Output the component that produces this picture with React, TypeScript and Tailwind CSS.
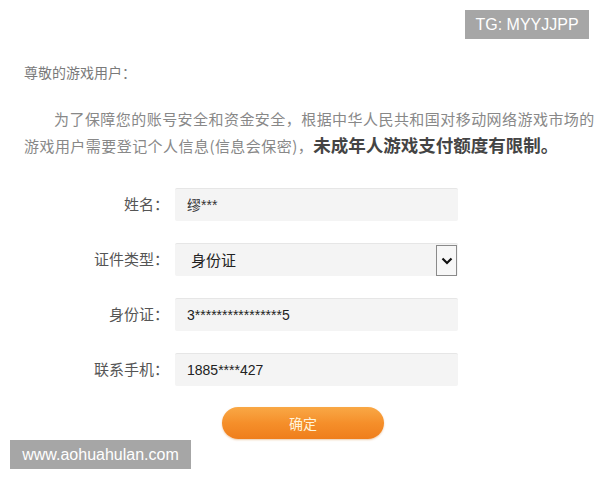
import React from "react";

const font = '"Noto Sans CJK SC", "Noto Sans", sans-serif';

function Field({ label, children }: { label: string; children: React.ReactNode }) {
  return (
    <div className="flex items-center">
      <div className="w-[169px] text-right text-[15px] leading-[20px] text-[#555] -mt-[2px]">{label}</div>
      <div className="ml-[6px]">{children}</div>
    </div>
  );
}

function TextBox({ value, cjk }: { value: string; cjk?: boolean }) {
  return (
    <div className="w-[283px] h-[33px] bg-[#f4f4f4] border-t border-[#e6e6e6] rounded-[2px] flex items-center pl-[12px]">
      <span
        className={cjk ? "text-[14px] text-[#333]" : "text-[14px] text-[#222]"}
        style={{ fontFamily: '"Liberation Sans", "Noto Sans CJK SC", sans-serif' }}
      >
        {value}
      </span>
    </div>
  );
}

export default function App() {
  return (
    <div className="relative w-[600px] h-[480px] bg-white overflow-hidden" style={{ fontFamily: font }}>
      <div className="pl-[24px] pt-[62px]">
        <p className="text-[14px] leading-[20px] text-[#7a7a7a]">尊敬的游戏用户：</p>
        <p className="mt-[24px] text-[15px] leading-[26px] text-[#888] whitespace-nowrap tracking-[0.45px]">
          <span className="pl-[30px]">为了保障您的账号安全和资金安全，根据中华人民共和国对移动网络游戏市场的</span>
          <br />
          游戏用户需要登记个人信息(信息会保密)，
          <span className="font-bold text-[17.5px] text-[#444] tracking-[0px]">未成年人游戏支付额度有限制。</span>
        </p>
      </div>

      <div className="mt-[29px] flex flex-col gap-[22px]">
        <Field label="姓名：">
          <TextBox value="缪***" cjk />
        </Field>
        <Field label="证件类型：">
          <div className="relative w-[283px] h-[33px] bg-[#f4f4f4] border-t border-[#e6e6e6] rounded-[2px] flex items-center pl-[16px]">
            <span className="text-[15px] text-[#222]">身份证</span>
            <div className="absolute right-[1px] top-[1px] w-[21px] h-[31px] border border-[#8a8a8a] bg-[#f7f7f7] flex items-center justify-center">
              <svg width="12" height="8" viewBox="0 0 12 8">
                <path d="M1.5 1.5 L6 6 L10.5 1.5" fill="none" stroke="#111" strokeWidth="2.2" />
              </svg>
            </div>
          </div>
        </Field>
        <Field label="身份证：">
          <TextBox value="3****************5" />
        </Field>
        <Field label="联系手机：">
          <TextBox value="1885****427" />
        </Field>
      </div>

      <div className="mt-[21px] ml-[222px] w-[162px] h-[32px] rounded-full bg-gradient-to-b from-[#f9a845] via-[#f58f2a] to-[#ef7e1c] shadow-[0_1px_2px_rgba(200,110,20,0.35)] flex items-center justify-center">
        <span className="text-[14px] text-[#fff4dc]">确定</span>
      </div>

      <div className="absolute left-[465px] top-[10px] w-[124px] h-[29px] bg-[#a6a6a6] flex items-center justify-center">
        <span className="text-[16px] text-white" style={{ fontFamily: '"Liberation Sans", sans-serif' }}>TG: MYYJJPP</span>
      </div>
      <div className="absolute left-[10px] top-[440px] w-[181px] h-[29px] bg-[#a6a6a6] flex items-center justify-center">
        <span className="text-[16px] text-white" style={{ fontFamily: '"Liberation Sans", sans-serif' }}>www.aohuahulan.com</span>
      </div>
    </div>
  );
}
